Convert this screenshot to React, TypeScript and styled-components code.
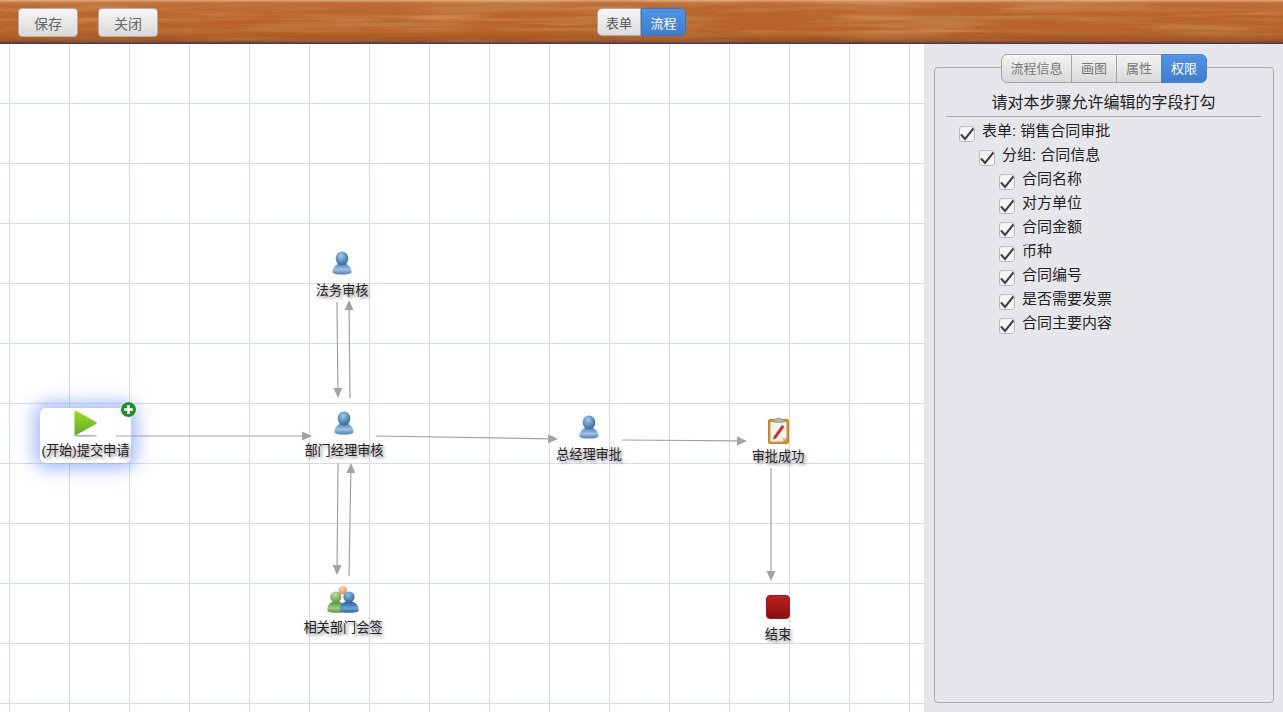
import {createGlobalStyle, styled} from "styled-components";

const GlobalStyle = createGlobalStyle`
  html, body {
    margin: 0;
    padding: 0;
    height: 100%;
    overflow: hidden;
    font-family: "Liberation Sans", "Noto Sans CJK SC", sans-serif;
    font-size: 14px;
    color: #222;
  }
  #root {
    height: 100%;
  }
`;

const Page = styled.div`
  display: flex;
  flex-direction: column;
  height: 712px;
`;

const Header = styled.header`
  position: relative;
  flex: none;
  height: 43px;
  box-sizing: content-box;
  border-bottom: 1px solid #34349a;
  background: #b9632a;
  display: flex;
  align-items: flex-start;
  overflow: hidden;
`;

const Wood = styled.svg`
  position: absolute;
  inset: 0;
  width: 100%;
  height: 100%;
`;

const LeftTools = styled.div`
  position: relative;
  display: flex;
  gap: 20px;
  padding: 8px 0 0 18px;
`;

const Button = styled.button`
  width: 60px;
  height: 29px;
  padding: 0;
  border: 1px solid #b5b0aa;
  border-radius: 4px;
  background: linear-gradient(#f6f6f6, #d9d9d9);
  color: #666;
  font: inherit;
  font-size: 14px;
`;

const Switcher = styled.div`
  position: absolute;
  left: 597px;
  top: 8px;
  display: flex;
`;

const Segment = styled.div<{$active?: boolean; $w: number}>`
  width: ${(p) => p.$w}px;
  height: 28px;
  box-sizing: border-box;
  display: flex;
  align-items: center;
  justify-content: center;
  font-size: 13px;
  border: 1px solid ${(p) => (p.$active ? "#3f72b8" : "#aaa9a6")};
  color: ${(p) => (p.$active ? "#fff" : "#555")};
  background: ${(p) =>
    p.$active
      ? "linear-gradient(#4f93e6, #3f7cd0)"
      : "linear-gradient(#f5f5f5, #dcdcdc)"};
  &:first-child {
    border-radius: 5px 0 0 5px;
  }
  &:last-child {
    border-radius: 0 5px 5px 0;
  }
`;

const Body = styled.div`
  flex: 1;
  display: flex;
  min-height: 0;
`;

const Canvas = styled.main`
  position: relative;
  width: 924px;
  flex: none;
  overflow: hidden;
  background-color: #fff;
  background-image: linear-gradient(to right, #d3dde6 1px, transparent 1px),
    linear-gradient(to bottom, #d3dde6 1px, transparent 1px);
  background-size: 60px 60px;
  background-position: 9px -1px;
`;

const Edges = styled.svg`
  position: absolute;
  left: 0;
  top: -44px;
  width: 924px;
  height: 712px;
`;

const Node = styled.div<{$x: number; $y: number; $w: number; $h: number; $selected?: boolean}>`
  position: absolute;
  left: ${(p) => p.$x}px;
  top: ${(p) => p.$y - 44}px;
  width: ${(p) => p.$w}px;
  height: ${(p) => p.$h}px;
  box-sizing: border-box;
  padding-top: ${(p) => (p.$selected ? 2 : 0)}px;
  display: flex;
  flex-direction: column;
  align-items: center;
  ${(p) =>
    p.$selected
      ? `background: #fff; border-radius: 6px; box-shadow: 0 0 18px 5px rgba(95, 135, 250, 0.6);`
      : ""}
`;

const NodeIcon = styled.svg<{$w: number; $h: number}>`
  display: block;
  flex: none;
  width: ${(p) => p.$w}px;
  height: ${(p) => p.$h}px;
`;

const NodeLabel = styled.div<{$gap: number}>`
  margin-top: ${(p) => p.$gap}px;
  font-size: 13.2px;
  line-height: 16px;
  white-space: nowrap;
  color: #222;
  text-shadow: 2px 2px 3px rgba(60, 60, 60, 0.6);
`;

const AddBadge = styled.svg`
  position: absolute;
  right: -6px;
  top: -7px;
  width: 17px;
  height: 17px;
`;

const Panel = styled.aside`
  flex: 1;
  min-width: 0;
  box-sizing: border-box;
  background: #e6e7eb;
  padding: 23px 9px 9px 10px;
  display: flex;
`;

const Fieldset = styled.section`
  flex: 1;
  min-width: 0;
  border: 1px solid #a9a9a9;
  border-radius: 4px;
  display: flex;
  flex-direction: column;
`;

const Tabs = styled.div`
  display: flex;
  justify-content: center;
  margin: -14px 0 0 1px;
`;

const Tab = styled.div<{$active?: boolean; $w: number}>`
  width: ${(p) => p.$w}px;
  height: 29px;
  box-sizing: border-box;
  display: flex;
  align-items: center;
  justify-content: center;
  font-size: 13px;
  padding-bottom: 2px;
  margin-left: -1px;
  border: 1px solid ${(p) => (p.$active ? "#4f82c6" : "#a3a3a3")};
  color: ${(p) => (p.$active ? "#fff" : "#777")};
  background: ${(p) =>
    p.$active
      ? "linear-gradient(#4f93e6, #3f7cd0)"
      : "linear-gradient(#f3f3f3, #d9d9d9)"};
  &:first-child {
    border-radius: 6px 0 0 6px;
  }
  &:last-child {
    border-radius: 0 6px 6px 0;
  }
`;

const Title = styled.div`
  margin: 7px 12px 0 11px;
  height: 26px;
  line-height: 25px;
  font-size: 16px;
  text-align: center;
  color: #222;
  border-bottom: 1px solid #a9a9a9;
`;

const Tree = styled.div`
  padding: 2px 0 0 24px;
`;

const Row = styled.div<{$level: number}>`
  display: flex;
  height: 24px;
  line-height: 24px;
  padding-left: ${(p) => p.$level * 20}px;
  font-size: 15px;
  color: #222;
`;

const CheckBox = styled.span`
  width: 16px;
  height: 16px;
  flex: none;
  box-sizing: border-box;
  margin: 7px 7px 0 0;
  border: 1px solid #bcbcbc;
  border-radius: 3px;
  background: #f4f4f4;
  display: flex;
  align-items: center;
  justify-content: center;
`;

const CheckMark = styled.svg`
  flex: none;
  width: 14px;
  height: 14px;
`;

function Person({w, h}: {w: number; h: number}) {
  return (
    <NodeIcon $w={w} $h={h} viewBox="0 0 20 25">
      <defs>
        <radialGradient id="personHead" cx="0.42" cy="0.3" r="0.75">
          <stop offset="0" stopColor="#a9cbe8" />
          <stop offset="0.5" stopColor="#5f94c4" />
          <stop offset="1" stopColor="#2f6296" />
        </radialGradient>
        <linearGradient id="personBody" x1="0" y1="0" x2="0" y2="1">
          <stop offset="0" stopColor="#4f84b8" />
          <stop offset="0.55" stopColor="#9cc2e0" />
          <stop offset="1" stopColor="#4b7fb2" />
        </linearGradient>
      </defs>
      <path d="M0.3 21 C0.5 17 3.5 14 6.5 12.5 L13.5 12.5 C16.5 14 19.5 17 19.7 21 C19.7 24.4 0.3 24.4 0.3 21 Z" fill="url(#personBody)" />
      <ellipse cx="10" cy="7.5" rx="6.3" ry="7" fill="url(#personHead)" />
    </NodeIcon>
  );
}

function Group() {
  return (
    <NodeIcon $w={32} $h={28} viewBox="0 0 32 28">
      <defs>
        <radialGradient id="groupGreen" cx="0.42" cy="0.3" r="0.8">
          <stop offset="0" stopColor="#c0e0a8" />
          <stop offset="1" stopColor="#4f8f35" />
        </radialGradient>
        <linearGradient id="groupGreenBody" x1="0" y1="0" x2="0" y2="1">
          <stop offset="0" stopColor="#4f8f35" />
          <stop offset="0.6" stopColor="#9ccc7e" />
          <stop offset="1" stopColor="#58983c" />
        </linearGradient>
        <radialGradient id="groupBlue" cx="0.42" cy="0.3" r="0.8">
          <stop offset="0" stopColor="#8fbde6" />
          <stop offset="1" stopColor="#1f5c9c" />
        </radialGradient>
        <linearGradient id="groupBlueBody" x1="0" y1="0" x2="0" y2="1">
          <stop offset="0" stopColor="#1f5c9c" />
          <stop offset="0.6" stopColor="#6ea4d6" />
          <stop offset="1" stopColor="#275f9e" />
        </linearGradient>
        <radialGradient id="groupOrange" cx="0.4" cy="0.3" r="0.8">
          <stop offset="0" stopColor="#fbd3ad" />
          <stop offset="1" stopColor="#e8843c" />
        </radialGradient>
      </defs>
      <circle cx="15.7" cy="4.3" r="4.1" fill="url(#groupOrange)" />
      <path d="M0.3 24.5 C0.3 18.5 3.5 15.5 9 15.5 C15 15.5 19 18.5 19 24.5 C19 27.6 0.3 27.6 0.3 24.5 Z" fill="url(#groupGreenBody)" />
      <circle cx="8.8" cy="11" r="5.6" fill="url(#groupGreen)" />
      <path d="M12.5 24.5 C12.5 18.5 16 15.5 22 15.5 C28 15.5 31.7 18.5 31.7 24.5 C31.7 27.6 12.5 27.6 12.5 24.5 Z" fill="url(#groupBlueBody)" />
      <circle cx="22" cy="11" r="5.6" fill="url(#groupBlue)" />
    </NodeIcon>
  );
}

function Play() {
  return (
    <NodeIcon $w={25} $h={27} viewBox="0 0 25 27">
      <defs>
        <linearGradient id="playFill" x1="0" y1="0" x2="0" y2="1">
          <stop offset="0" stopColor="#9fdc1e" />
          <stop offset="1" stopColor="#62aa2c" />
        </linearGradient>
      </defs>
      <ellipse cx="12" cy="25.8" rx="12" ry="1" fill="#b5b5b5" />
      <path d="M1.5 2 C1.5 0.8 2.6 0.4 3.6 1 L23 12 C24 12.6 24 13.4 23 14 L3.6 24.8 C2.6 25.4 1.5 25 1.5 24 Z" fill="url(#playFill)" />
    </NodeIcon>
  );
}

function Clipboard() {
  return (
    <NodeIcon $w={23} $h={27} viewBox="0 0 23 27">
      <rect x="1.5" y="2.5" width="20" height="24" rx="1.5" fill="#d2922f" stroke="#c48226" />
      <path d="M3.5 5 H19.5 V21 L15.5 24.5 H3.5 Z" fill="#f6f4ef" />
      <path d="M15.5 24.5 L19.5 21 L15 20.5 Z" fill="#cfcfcf" />
      <path d="M8 2 C8.5 0 14.5 0 15 2 L16.5 6 H6.5 Z" fill="#b0b0b0" />
      <path d="M6.5 20 L15 8 L17.4 9.7 L9 21.5 L6.3 22.6 Z" fill="#d42a2a" />
    </NodeIcon>
  );
}

function Stop() {
  return (
    <NodeIcon $w={24} $h={24} viewBox="0 0 24 24">
      <defs>
        <linearGradient id="stopFill" x1="0" y1="0" x2="0" y2="1">
          <stop offset="0" stopColor="#bf2020" />
          <stop offset="1" stopColor="#8a0e0e" />
        </linearGradient>
      </defs>
      <rect x="0.5" y="0.5" width="23" height="23" rx="3.5" fill="url(#stopFill)" stroke="#9a1a1a" />
    </NodeIcon>
  );
}

const edges = [
  [116, 436, 312, 436],
  [350, 398, 349, 300],
  [337, 302, 338, 398],
  [376, 436, 558, 439],
  [622, 440, 747, 441],
  [338, 463, 337, 575],
  [349, 576, 351, 463],
  [771, 468, 771, 581],
];

function Arrow({line}: {line: number[]}) {
  const [x1, y1, x2, y2] = line;
  const angle = Math.atan2(y2 - y1, x2 - x1);
  const px = (d: number, s: number) => x2 - d * Math.cos(angle) - s * Math.sin(angle);
  const py = (d: number, s: number) => y2 - d * Math.sin(angle) + s * Math.cos(angle);
  return (
    <g>
      <line x1={x1} y1={y1} x2={px(8, 0)} y2={py(8, 0)} stroke="#a3a3a3" strokeWidth="1.2" />
      <polygon
        points={`${x2},${y2} ${px(10, 4.5)},${py(10, 4.5)} ${px(10, -4.5)},${py(10, -4.5)}`}
        fill="#a3a3a3"
      />
    </g>
  );
}

const fields = ["合同名称", "对方单位", "合同金额", "币种", "合同编号", "是否需要发票", "合同主要内容"];

function TreeRow({level, text}: {level: number; text: string}) {
  return (
    <Row $level={level}>
      <CheckBox>
        <CheckMark viewBox="0 0 14 14">
          <path d="M1 7.5 L5 12 L13.5 1.5" fill="none" stroke="#3c3c3c" strokeWidth="2" />
        </CheckMark>
      </CheckBox>
      {text}
    </Row>
  );
}

export default function App() {
  return (
    <Page>
      <GlobalStyle />
      <Header>
        <Wood preserveAspectRatio="none">
          <defs>
            <filter id="grainDark" x="0" y="0" width="100%" height="100%">
              <feTurbulence type="fractalNoise" baseFrequency="0.007 0.18" numOctaves="3" seed="4" />
              <feColorMatrix
                type="matrix"
                values="0 0 0 0 0.50
                        0 0 0 0 0.20
                        0 0 0 0 0.05
                        2.8 0 0 0 -1.2"
              />
            </filter>
            <filter id="grainLight" x="0" y="0" width="100%" height="100%">
              <feTurbulence type="fractalNoise" baseFrequency="0.006 0.13" numOctaves="3" seed="23" />
              <feColorMatrix
                type="matrix"
                values="0 0 0 0 0.85
                        0 0 0 0 0.50
                        0 0 0 0 0.24
                        1.6 0 0 0 -0.85"
              />
            </filter>
            <linearGradient id="woodShade" x1="0" y1="0" x2="0" y2="1">
              <stop offset="0" stopColor="#e6bc9c" stopOpacity="0.85" />
              <stop offset="0.08" stopColor="#d98a50" stopOpacity="0.2" />
              <stop offset="0.7" stopColor="#9a4c18" stopOpacity="0" />
              <stop offset="0.95" stopColor="#7a3a10" stopOpacity="0.45" />
              <stop offset="1" stopColor="#5e2a08" stopOpacity="0.7" />
            </linearGradient>
          </defs>
          <rect width="100%" height="100%" fill="#b9632a" />
          <rect width="100%" height="100%" filter="url(#grainLight)" />
          <rect width="100%" height="100%" filter="url(#grainDark)" />
          <rect width="100%" height="100%" fill="url(#woodShade)" />
        </Wood>
        <LeftTools>
          <Button>保存</Button>
          <Button>关闭</Button>
        </LeftTools>
        <Switcher>
          <Segment $w={44}>表单</Segment>
          <Segment $w={45} $active>流程</Segment>
        </Switcher>
      </Header>
      <Body>
        <Canvas>
          <Node $x={40} $y={408} $w={91} $h={55} $selected>
            <Play />
            <NodeLabel $gap={6}>(开始)提交申请</NodeLabel>
            <AddBadge viewBox="0 0 17 17">
              <circle cx="8.5" cy="8.5" r="8" fill="#1f8f2a" stroke="#fff" strokeWidth="1" />
              <path d="M8.5 4 V13 M4 8.5 H13" stroke="#fff" strokeWidth="2.6" />
            </AddBadge>
          </Node>
          <Node $x={302} $y={251} $w={80} $h={50}>
            <Person w={20} h={25} />
            <NodeLabel $gap={7}>法务审核</NodeLabel>
          </Node>
          <Node $x={304} $y={411} $w={80} $h={50}>
            <Person w={20} h={25} />
            <NodeLabel $gap={7}>部门经理审核</NodeLabel>
          </Node>
          <Node $x={549} $y={415} $w={80} $h={50}>
            <Person w={20} h={25} />
            <NodeLabel $gap={7}>总经理审批</NodeLabel>
          </Node>
          <Node $x={738} $y={417} $w={80} $h={50}>
            <Clipboard />
            <NodeLabel $gap={5}>审批成功</NodeLabel>
          </Node>
          <Node $x={303} $y={586} $w={80} $h={50}>
            <Group />
            <NodeLabel $gap={6}>相关部门会签</NodeLabel>
          </Node>
          <Node $x={738} $y={595} $w={80} $h={50}>
            <Stop />
            <NodeLabel $gap={8}>结束</NodeLabel>
          </Node>
          <Edges>
            {edges.map((line, i) => (
              <Arrow key={i} line={line} />
            ))}
          </Edges>
        </Canvas>
        <Panel>
          <Fieldset>
            <Tabs>
              <Tab $w={71}>流程信息</Tab>
              <Tab $w={46}>画图</Tab>
              <Tab $w={46}>属性</Tab>
              <Tab $w={46} $active>权限</Tab>
            </Tabs>
            <Title>请对本步骤允许编辑的字段打勾</Title>
            <Tree>
              <TreeRow level={0} text="表单: 销售合同审批" />
              <TreeRow level={1} text="分组: 合同信息" />
              {fields.map((f) => (
                <TreeRow key={f} level={2} text={f} />
              ))}
            </Tree>
          </Fieldset>
        </Panel>
      </Body>
    </Page>
  );
}
